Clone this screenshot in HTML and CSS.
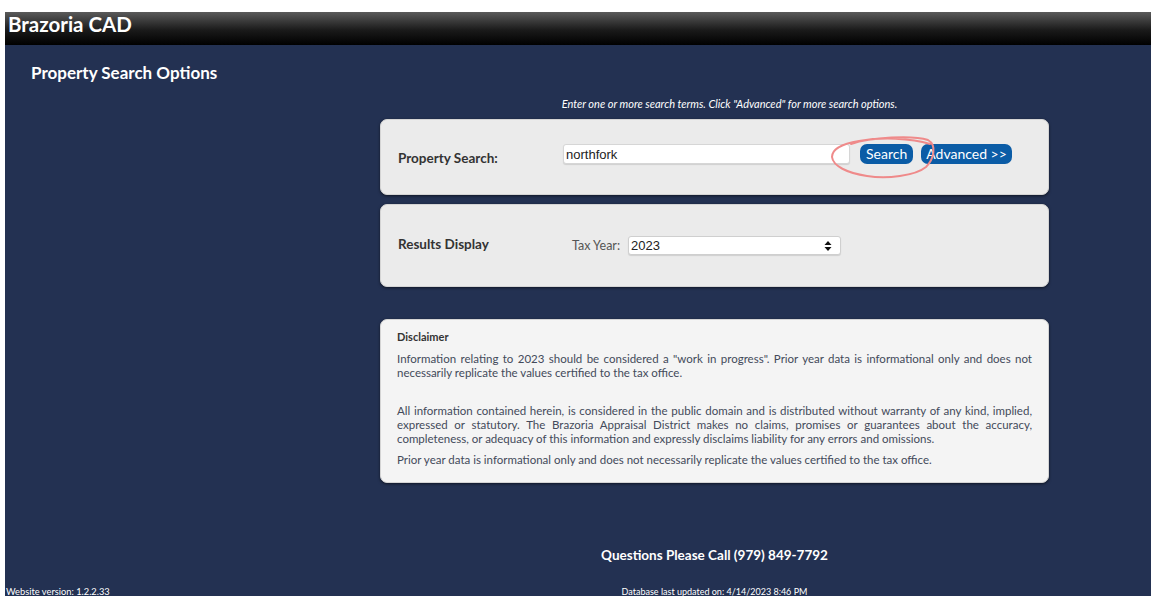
FILE: index.html
```html
<!DOCTYPE html>
<html lang="en">
<head>
<meta charset="utf-8">
<title>Brazoria CAD - Property Search</title>
<link rel="stylesheet" href="styles.css">
</head>
<body>
<div class="page">
  <header class="topbar">Brazoria CAD</header>
  <main class="main">
    <h1 class="title">Property Search Options</h1>

    <div class="grid">
      <section class="content">
        <p class="hint">Enter one or more search terms. Click "Advanced" for more search options.</p>

        <div class="panel panel-search">
          <label class="label" for="q">Property Search:</label>
          <div class="search-row">
            <input class="field" id="q" type="text" value="northfork">
            <button class="btn">Search</button>
            <button class="btn">Advanced &gt;&gt;</button>
          </div>
          <svg class="scribble" width="112" height="48" viewBox="0 0 112 48" aria-hidden="true">
            <path d="M22 9 C42 2 84 0 99 5 C108 10 105 24 97 32 C86 41 58 44 38 41 C18 38 4 31 3 22 C3 14 12 9 30 6 C52 2 82 3 101 9" fill="none" stroke="#ef8a8a" stroke-width="2" stroke-linecap="round"/>
          </svg>
        </div>

        <div class="panel panel-display">
          <span class="label">Results Display</span>
          <span class="year-label">Tax Year:</span>
          <div class="select">
            <span>2023</span>
            <svg width="8" height="10" viewBox="0 0 8 10" aria-hidden="true"><path d="M4 0 L7.5 4 H0.5 Z M4 10 L7.5 6 H0.5 Z" fill="#111"/></svg>
          </div>
        </div>

        <div class="panel panel-note">
          <h2 class="note-title">Disclaimer</h2>
          <p class="note first">Information relating to 2023 should be considered a "work in progress". Prior year data is informational only and does not necessarily replicate the values certified to the tax office.</p>
          <p class="note">All information contained herein, is considered in the public domain and is distributed without warranty of any kind, implied, expressed or statutory. The Brazoria Appraisal District makes no claims, promises or guarantees about the accuracy, completeness, or adequacy of this information and expressly disclaims liability for any errors and omissions.</p>
          <p class="note">Prior year data is informational only and does not necessarily replicate the values certified to the tax office.</p>
        </div>
      </section>

      <p class="phone">Questions Please Call (979) 849-7792</p>

      <span class="version">Website version: 1.2.2.33</span>
      <span class="updated">Database last updated on: 4/14/2023 8:46 PM</span>
    </div>
  </main>
</div>
</body>
</html>
```

FILE: styles.css
```css
html, body {
  margin: 0;
  padding: 0;
  background: #ffffff;
  height: 100%;
}

body {
  font-family: Lato, "Open Sans", sans-serif;
}

.page {
  margin: 12px 0 0 5px;
  height: calc(100vh - 12px);
  display: flex;
  flex-direction: column;
  overflow: hidden;
}

.topbar {
  flex: 0 0 33px;
  background: linear-gradient(#5a5a5a 0%, #1a1a1a 55%, #000 100%);
  color: #fff;
  font-weight: 700;
  font-size: 20.5px;
  line-height: 25px;
  padding-left: 3px;
}

.main {
  flex: 1;
  background: #233152;
  display: flex;
  flex-direction: column;
}

.title {
  margin: 18px 0 0 26px;
  font-size: 17px;
  line-height: 20px;
  font-weight: 700;
  color: #fff;
}

.grid {
  flex: 1;
  display: grid;
  grid-template-columns: 375px 669px 1fr;
  grid-template-rows: auto 1fr auto;
}

.content {
  grid-column: 2;
  grid-row: 1;
}

.hint {
  margin: 15px 0 9px;
  padding-left: 30px;
  text-align: center;
  color: #fff;
  font-style: italic;
  font-size: 11px;
  line-height: 12px;
}

.panel {
  position: relative;
  box-sizing: border-box;
  background: #ebebeb;
  border: 1px solid #d4d4d4;
  border-radius: 7px;
  box-shadow: 0 1px 3px rgba(0, 0, 0, 0.55);
}

.label {
  color: #333;
  font-weight: 700;
  font-size: 13.5px;
}

.panel-search {
  height: 76px;
  display: flex;
  align-items: center;
  padding-left: 17px;
}

.panel-search .label {
  width: 165px;
  padding-top: 2px;
}

.search-row {
  display: flex;
  align-items: center;
  gap: 8px;
  margin-bottom: 6px;
}

.field {
  box-sizing: border-box;
  width: 287px;
  height: 20px;
  border: 1px solid #d6d6d6;
  border-radius: 3px;
  background: #fff;
  box-shadow: 0 1px 1px rgba(0, 0, 0, 0.12);
  font-family: "Liberation Sans", Arial, sans-serif;
  font-size: 13px;
  color: #222;
  padding: 0 2px;
  margin-right: 2px;
}

.btn {
  height: 20px;
  border: 0;
  border-radius: 7px;
  background: #0b5ca6;
  color: #fff;
  font-family: Lato, sans-serif;
  font-size: 14px;
  line-height: 20px;
  padding: 0 6px;
}

.btn + .btn {
  padding: 0 5px;
}

.scribble {
  position: absolute;
  left: 448px;
  top: 15px;
}

.panel-display {
  margin-top: 9px;
  height: 83px;
  display: flex;
  align-items: center;
  padding-left: 17px;
}

.panel-display .label {
  width: 174px;
  margin-top: -4px;
}

.year-label {
  color: #555;
  font-size: 12.5px;
  margin-right: 8px;
}

.select {
  box-sizing: border-box;
  width: 213px;
  height: 19px;
  background: #fff;
  border: 1px solid #cfcfcf;
  border-radius: 3px;
  box-shadow: 0 1px 1px rgba(0, 0, 0, 0.12);
  display: flex;
  align-items: center;
  justify-content: space-between;
  padding: 0 8px 0 2px;
  font-family: "Liberation Sans", Arial, sans-serif;
  font-size: 13px;
  color: #222;
}

.panel-note {
  margin-top: 32px;
  background: #f4f4f4;
  padding: 10px 16px 15px 16px;
}

.note-title {
  margin: 0 0 8px;
  font-size: 11px;
  line-height: 14px;
  font-weight: 700;
  color: #333;
}

.note {
  margin: 0 0 7px;
  font-size: 11.5px;
  line-height: 14px;
  color: #434a5a;
  text-align: justify;
}

.note.first {
  margin-bottom: 24px;
}

.note:last-child {
  margin-bottom: 0;
}

.phone {
  grid-column: 2;
  grid-row: 2;
  align-self: end;
  margin: 0 0 23px;
  text-align: center;
  color: #fff;
  font-weight: 700;
  font-size: 13.5px;
  line-height: 18px;
}

.version,
.updated {
  grid-row: 3;
  color: #fff;
  font-size: 9px;
  line-height: 9px;
}

.version {
  grid-column: 1;
  padding-left: 1px;
  font-size: 9.3px;
}

.updated {
  grid-column: 2;
  text-align: center;
}
```
